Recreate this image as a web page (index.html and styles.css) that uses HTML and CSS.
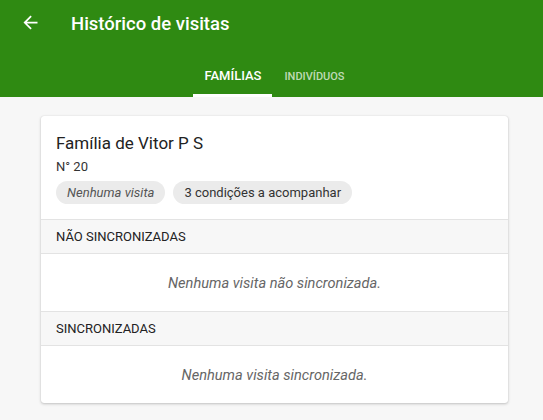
FILE: index.html
```html
<!DOCTYPE html>
<html lang="pt">
<head>
<meta charset="utf-8">
<link rel="stylesheet" href="styles.css">
</head>
<body>
<header class="appbar">
  <div class="toolbar">
    <svg class="back" width="21" height="21" viewBox="0 0 24 24"><path d="M20 11H7.83l5.59-5.59L12 4l-8 8 8 8 1.41-1.41L7.83 13H20v-2z" fill="#fff"/></svg>
    <h1 class="title">Histórico de visitas</h1>
  </div>
  <nav class="tabs">
    <div class="tab active">FAMÍLIAS</div>
    <div class="tab">INDIVÍDUOS</div>
  </nav>
</header>
<main class="content">
  <section class="card">
    <div class="card-head">
      <div class="name">Família de Vitor P S</div>
      <div class="num">N° 20</div>
      <div class="chips">
        <span class="chip italic">Nenhuma visita</span>
        <span class="chip">3 condições a acompanhar</span>
      </div>
    </div>
    <div class="sect">NÃO SINCRONIZADAS</div>
    <div class="empty">Nenhuma visita não sincronizada.</div>
    <div class="sect">SINCRONIZADAS</div>
    <div class="empty">Nenhuma visita sincronizada.</div>
  </section>
</main>
</body>
</html>
```
FILE: styles.css
```css
* { box-sizing: border-box; }
html, body { margin: 0; padding: 0; }
body {
  font-family: Roboto, "Noto Sans", sans-serif;
  background: #f7f7f7;
  width: 543px;
  height: 420px;
  overflow: hidden;
}
.appbar {
  background: #2f8a12;
  color: #fff;
  height: 97px;
  display: flex;
  flex-direction: column;
}
.toolbar {
  height: 48px;
  display: flex;
  align-items: center;
  padding-left: 20px;
}
.back { flex: none; margin-top: -3px; }
.title {
  margin: 0 0 0 30px;
  font-size: 18.5px;
  font-weight: 500;
}
.tabs {
  flex: 1;
  display: flex;
  justify-content: center;
  align-items: stretch;
  padding-left: 7px;
}
.tab {
  font-size: 11px;
  font-weight: 500;
  color: rgba(255,255,255,0.7);
  padding: 0 12px 11px;
  display: flex;
  align-items: flex-end;
  border-bottom: 3px solid transparent;
}
.tab.active {
  color: #fff;
  border-bottom-color: #fff;
  font-size: 13px;
  width: 79px;
  padding: 0 0 11px;
  justify-content: center;
}
.content {
  padding: 19px 35px 0 41px;
}
.card {
  background: #fff;
  border-radius: 3px;
  box-shadow: 0 1px 3px rgba(0,0,0,0.22), 0 0 1px rgba(0,0,0,0.15);
  overflow: hidden;
}
.card-head {
  padding: 17px 15px 0;
  height: 103px;
}
.name {
  font-size: 17px;
  color: #222;
  line-height: 20px;
}
.num {
  font-size: 13px;
  color: #333;
  margin-top: 6px;
  line-height: 15px;
}
.chips {
  display: flex;
  gap: 8px;
  margin-top: 7px;
}
.chip {
  background: #ebebeb;
  border-radius: 12px;
  height: 23px;
  padding: 0 11px;
  font-size: 13px;
  color: #333;
  display: flex;
  align-items: center;
}
.chip.italic { font-style: italic; color: #555; }
.sect {
  background: #f7f7f7;
  border-top: 1px solid #e3e3e3;
  border-bottom: 1px solid #e3e3e3;
  height: 35px;
  padding-left: 15px;
  display: flex;
  align-items: center;
  font-size: 13px;
  color: #222;
}
.empty {
  height: 57px;
  display: flex;
  align-items: center;
  justify-content: center;
  font-style: italic;
  color: #666;
  font-size: 14.6px;
}
```
